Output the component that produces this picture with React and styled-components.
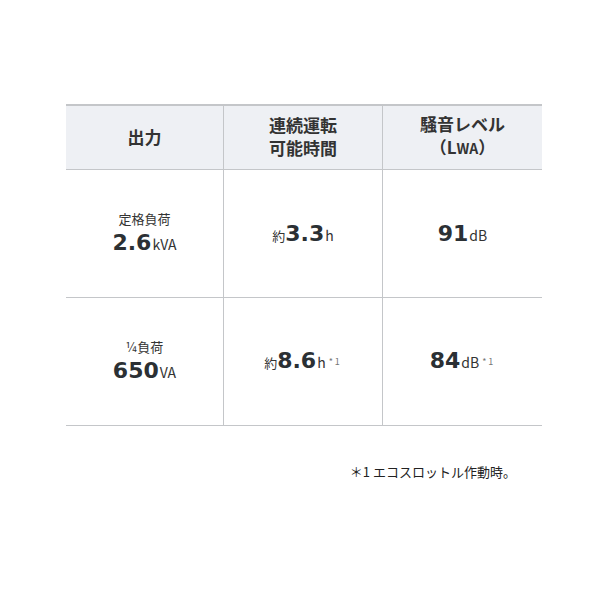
import React from 'react'
import styled, { createGlobalStyle } from 'styled-components'

const GlobalStyle = createGlobalStyle`
  body {
    margin: 0;
    background: #fff;
    font-family: 'Noto Sans CJK JP', 'Noto Sans', sans-serif;
    color: #333;
  }
`

const Page = styled.div`
  width: 600px;
  padding: 104px 58px 0 66px;
  box-sizing: border-box;
`

const Table = styled.div`
  display: grid;
  grid-template-columns: 157px 159px 160px;
  border-top: 2px solid #c4c6c9;
`

const HeadCell = styled.div`
  height: 64px;
  background: #eef0f4;
  border-bottom: 1px solid #c4c6c9;
  border-left: ${p => (p.first ? 'none' : '1px solid #c4c6c9')};
  display: flex;
  align-items: center;
  justify-content: center;
  text-align: center;
  font-size: 17px;
  font-weight: 700;
  line-height: 23px;
  color: #333;
  box-sizing: border-box;
  padding-bottom: 3px;
`

const Small = styled.span`
  font-size: 14px;
`

const Cell = styled.div`
  height: 128px;
  border-bottom: 1px solid #c4c6c9;
  border-left: ${p => (p.first ? 'none' : '1px solid #c4c6c9')};
  display: flex;
  flex-direction: column;
  align-items: center;
  justify-content: center;
  box-sizing: border-box;
  padding-top: 2px;
  color: #2f3438;
`

const Label = styled.div`
  font-size: 13px;
  line-height: 18px;
  color: #333;
`

const Value = styled.div`
  display: flex;
  align-items: baseline;
  line-height: 30px;
`

const Num = styled.span`
  font-family: 'DejaVu Sans', sans-serif;
  font-weight: 700;
  font-size: 22px;
  color: #2b3034;
`

const Unit = styled.span`
  font-size: 14px;
  color: #333;
  margin-left: 1px;
`

const Pre = styled.span`
  font-size: 13px;
  color: #333;
`

const Note = styled.sup`
  font-size: 9px;
  color: #777;
  margin-left: 3px;
  position: relative;
  top: -3px;
  letter-spacing: 2px;
`

const Footnote = styled.p`
  margin: 36px 26px 0 0;
  text-align: right;
  font-size: 13px;
  color: #222;
`

const rows = [
  {
    label: '定格負荷',
    out: ['2.6', 'kVA'],
    time: ['3.3', 'h', false],
    noise: ['91', 'dB', false],
  },
  {
    label: '¼負荷',
    out: ['650', 'VA'],
    time: ['8.6', 'h', true],
    noise: ['84', 'dB', true],
  },
]

const App = () => (
  <Page>
    <GlobalStyle />
    <Table>
      <HeadCell first>出力</HeadCell>
      <HeadCell>
        <div>
          連続運転
          <br />
          可能時間
        </div>
      </HeadCell>
      <HeadCell>
        <div>
          騒音レベル
          <br />
          （L<Small>WA</Small>）
        </div>
      </HeadCell>
      {rows.map(r => (
        <React.Fragment key={r.label}>
          <Cell first>
            <Label>{r.label}</Label>
            <Value>
              <Num>{r.out[0]}</Num>
              <Unit>{r.out[1]}</Unit>
            </Value>
          </Cell>
          <Cell>
            <Value>
              <Pre>約</Pre>
              <Num>{r.time[0]}</Num>
              <Unit>{r.time[1]}</Unit>
              {r.time[2] && <Note>*1</Note>}
            </Value>
          </Cell>
          <Cell>
            <Value>
              <Num>{r.noise[0]}</Num>
              <Unit>{r.noise[1]}</Unit>
              {r.noise[2] && <Note>*1</Note>}
            </Value>
          </Cell>
        </React.Fragment>
      ))}
    </Table>
    <Footnote>＊1 エコスロットル作動時。</Footnote>
  </Page>
)

export default App
